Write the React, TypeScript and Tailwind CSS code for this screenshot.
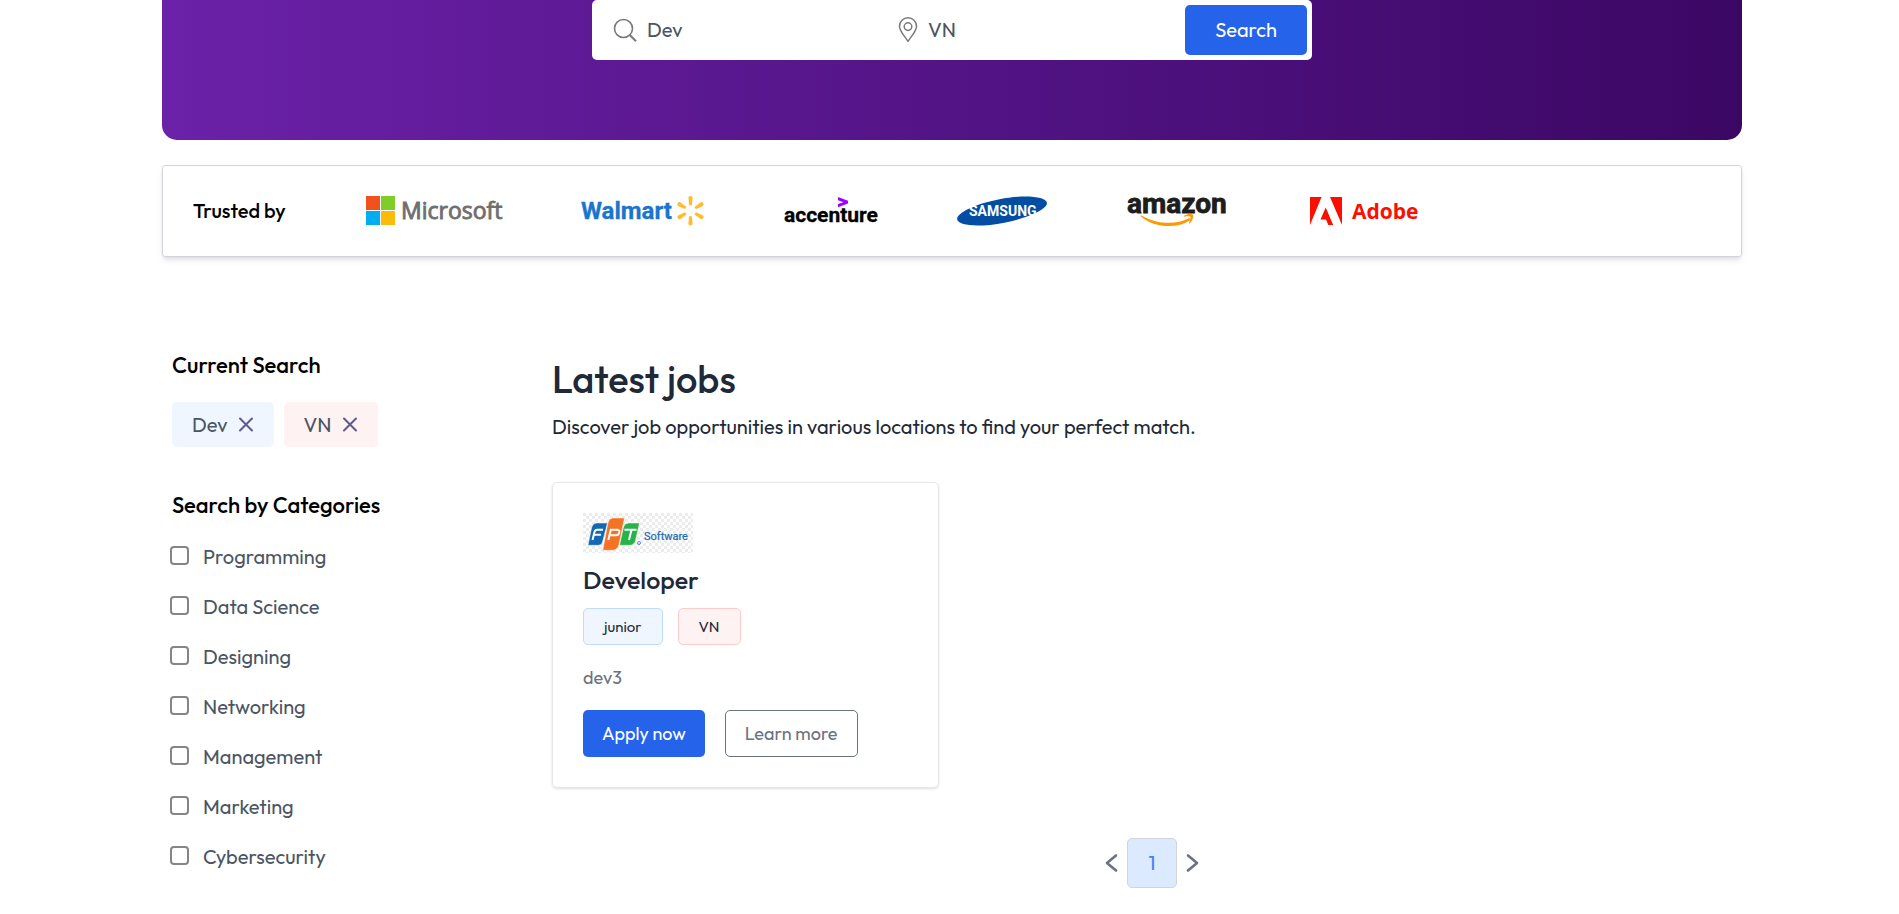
import { useState } from "react";

const CATEGORIES = [
  "Programming",
  "Data Science",
  "Designing",
  "Networking",
  "Management",
  "Marketing",
  "Cybersecurity",
];

function SearchIcon() {
  return (
    <svg className="size-6 shrink-0" viewBox="0 0 24 24" fill="none" stroke="#7a7a7a" strokeWidth="1.6" aria-hidden="true">
      <circle cx="10.500" cy="10.5" r="9" />
      <path d="M16.800 17 L23 23.3" strokeWidth="2" />
    </svg>
  );
}

function PinIcon() {
  return (
    <svg className="h-[26px] w-5 shrink-0" viewBox="0 0 20 26" fill="none" stroke="#7a7a7a" strokeWidth="1.5" strokeLinejoin="round" aria-hidden="true">
      <path d="M10 24.5 C7.5 20 1.5 14.5 1.5 9.2 A8.5 8.4 0 0 1 18.5 9.2 C18.5 14.5 12.5 20 10 24.5 Z" />
      <circle cx="10" cy="9.6" r="3.8" />
    </svg>
  );
}

function CrossIcon() {
  return (
    <svg className="block size-4" viewBox="0 0 16 16" stroke="#5b5b8c" strokeWidth="2" strokeLinecap="round" aria-hidden="true">
      <path d="M2 1.500 L14 13.500 M14 1.500 L2 13.500" />
    </svg>
  );
}

function MicrosoftLogo() {
  return (
    <svg className="overflow-visible" width="135" height="30" viewBox="0 0 135 30" role="img" aria-label="Microsoft">
      <rect x="0" y="0" width="14" height="14" fill="#f1511b" />
      <rect x="15" y="0" width="14" height="14" fill="#80cc28" />
      <rect x="0" y="15" width="14" height="14" fill="#00adef" />
      <rect x="15" y="15" width="14" height="14" fill="#fbbc09" />
      <text x="35" y="23" fill="#6f6f6f" stroke="#6f6f6f" strokeWidth="0.900" fontFamily="'Open Sans', sans-serif" fontSize="23">Microsoft</text>
    </svg>
  );
}

function WalmartLogo() {
  return (
    <svg className="overflow-visible" width="123" height="30" viewBox="0 0 123 30" role="img" aria-label="Walmart">
      <text x="0" y="23" fill="#1a75cf" stroke="#1a75cf" strokeWidth="0.300" fontFamily="Roboto, sans-serif" fontSize="24" fontWeight="700">Walmart</text>
      <g fill="#ffbc2b">
        {[0, 60, 120, 180, 240, 300].map((angle) => (
          <path key={angle} transform={`rotate(${angle} 109.5 14.7)`} d="M107.4 1.6 Q107.4 0 109.5 0 Q111.6 0 111.6 1.6 L110.9 9 Q109.5 10 108.1 9 Z" />
        ))}
      </g>
    </svg>
  );
}

function AccentureLogo() {
  return (
    <svg className="overflow-visible" width="93" height="30" viewBox="0 0 93 30" role="img" aria-label="accenture">
      <path d="M54 1 L64 4.8 V7.6 L54 11.2 V7.9 L59.4 6.2 L54 4.3 Z" fill="#a100ff" />
      <text x="0" y="26" fill="#000" stroke="#000" strokeWidth="0.300" fontFamily="Roboto, sans-serif" fontSize="21" fontWeight="700">accenture</text>
    </svg>
  );
}

function SamsungLogo() {
  return (
    <svg width="90" height="30" viewBox="0 0 90 30" role="img" aria-label="Samsung">
      <path d="M89.9 6.8 C91 12.8 72 21.9 47.500 26.700 C23 31.500 1.300 30 0.200 23.600 C-1 17.300 18 8 42.500 3.300 C67 -1.500 88.700 0.400 89.900 6.800 Z" fill="#034ea2" />
      <text x="12" y="20" fill="#fff" fontFamily="Roboto, sans-serif" fontSize="14" fontWeight="700">SAMSUNG</text>
    </svg>
  );
}

function AmazonLogo() {
  return (
    <svg className="overflow-visible" width="98" height="30" viewBox="0 0 98 30" role="img" aria-label="amazon">
      <text x="0" y="17" fill="#1d1d1b" stroke="#1d1d1b" strokeWidth="0.800" fontFamily="Roboto, sans-serif" fontSize="28" fontWeight="700">amazon</text>
      <path d="M14.500 19.500 C30 29 50 28.500 61.500 22.500 C63 21.800 64 23.300 62.500 24.500 C50 33 27 32 14 20.400 C13.500 19.700 13.900 19.200 14.500 19.500 Z" fill="#ff9900" />
      <path d="M57 19.800 C60 17.700 65 17.600 66 18.700 C66.800 20 65.500 25 62.800 27.200 C62.200 27.700 61.800 27.400 62 26.700 C63 24.200 64 21.500 63.300 20.800 C62.500 20 59.500 20.400 57.300 20.700 C56.500 20.800 56.400 20.300 57 19.800 Z" fill="#ff9900" />
    </svg>
  );
}

function AdobeLogo() {
  return (
    <svg className="overflow-visible" width="113" height="30" viewBox="0 0 113 30" role="img" aria-label="Adobe">
      <path d="M5 1 H16.600 L5 29 Z M25 1 H37 V29 Z M20.700 11.400 L28.200 29 H23.300 L21 23.400 H15.500 Z" fill="#fa0f00" />
      <text x="47" y="23" fill="#fa0f00" fontFamily="'Open Sans', sans-serif" fontSize="21" fontWeight="700">Adobe</text>
    </svg>
  );
}

function FptLogo() {
  return (
    <svg width="110" height="40" viewBox="0 0 110 40" role="img" aria-label="FPT Software">
      <defs>
        <pattern id="checks" width="6" height="6" patternUnits="userSpaceOnUse">
          <rect width="6" height="6" fill="#fff" />
          <rect width="3" height="3" fill="#ececec" />
          <rect x="3" y="3" width="3" height="3" fill="#ececec" />
        </pattern>
      </defs>
      <rect width="110" height="40" fill="url(#checks)" />
      <g stroke="#fff" strokeWidth="0.5">
        <path d="M14 10 H24.500 L19.500 29 Q18.700 32.300 15.500 32.300 H5 L8.500 15 Q9.800 10 14 10 Z" fill="#1368b3" />
        <path d="M46 10 H56.500 L52.500 27.500 Q51.200 32.300 47 32.300 H36.500 L40.500 14 Q41.500 10 46 10 Z" fill="#27b24a" />
        <path d="M30 5 H41.500 L36 31.500 Q34.500 37.300 29.500 37.300 H19.800 L24.700 11 Q26 5 30 5 Z" fill="#f37224" />
      </g>
      <g fill="none" stroke="#fff" strokeWidth="2">
        <path d="M9.500 27 L11.500 19 Q12.100 16.800 14.200 16.800 H20 M11 21.800 H18" />
        <path d="M25.300 27 L27.800 16.800 H34 Q37 16.800 36.300 19.400 Q35.600 22.200 33 22.200 H27" />
        <path d="M41.500 16.800 H53.500 M48.500 16.800 L46 27" />
      </g>
      <circle cx="56" cy="30" r="1.500" fill="none" stroke="#1368b3" strokeWidth="0.700" />
      <text x="61" y="27" fill="#1b69b4" stroke="#1b69b4" strokeWidth="0.200" fontFamily="Roboto, sans-serif" fontSize="11">Software</text>
    </svg>
  );
}

function Chevron({ path }: { path: string }) {
  return (
    <svg className="block h-5 w-3.5" viewBox="0 0 14 20" fill="none" stroke="#6b7280" strokeWidth="2.600" strokeLinecap="round" strokeLinejoin="round" aria-hidden="true">
      <path d={path} />
    </svg>
  );
}

export default function App() {
  const [title, setTitle] = useState("Dev");
  const [place, setPlace] = useState("VN");

  return (
    <div className="overflow-hidden bg-white pr-[147px] pl-[152px] font-[Outfit,Lato,sans-serif] text-[20px] leading-[30px] text-[#1f2937]">
      <section className="mx-[10px] rounded-b-[15px] bg-[linear-gradient(to_right,#6b21a8,#3b0764)] pb-20">
        <form className="mx-auto flex w-[720px] max-w-full items-center justify-between rounded-[5px] bg-white p-[5px] text-[#4b5563]" onSubmit={(e) => e.preventDefault()}>
          <label className="ml-4 flex items-center gap-2.5">
            <SearchIcon />
            <input aria-label="Job title" className="w-[234px] outline-none" value={title} onChange={(e) => setTitle(e.target.value)} />
          </label>
          <label className="flex items-center gap-2.5">
            <PinIcon />
            <input aria-label="Location" className="w-60 outline-none" value={place} onChange={(e) => setPlace(e.target.value)} />
          </label>
          <button type="submit" className="h-[50px] rounded-[5px] bg-[#2563eb] px-[30px] text-white">Search</button>
        </form>
      </section>

      <section className="mx-[10px] mt-[25px] flex h-[92px] items-center gap-20 rounded-[3px] border border-[#d1d5db] px-[30px] shadow-md">
        <p className="font-medium text-black">Trusted by</p>
        <MicrosoftLogo />
        <WalmartLogo />
        <AccentureLogo />
        <SamsungLogo />
        <AmazonLogo />
        <AdobeLogo />
      </section>

      <div className="mt-[90px] flex">
        <aside className="w-1/4 pl-5">
          <h2 className="pt-[3px] text-[22px] leading-[30px] font-medium text-black">Current Search</h2>
          <div className="mt-[22px] flex gap-2.5 text-[#4b5563]">
            <span className="flex h-[45px] items-center gap-2.5 rounded-[5px] bg-[#eff6ff] px-5">
              Dev
              <button type="button" aria-label="Remove Dev"><CrossIcon /></button>
            </span>
            <span className="flex h-[45px] items-center gap-2.5 rounded-[5px] bg-[#fef2f2] px-5">
              VN
              <button type="button" aria-label="Remove VN"><CrossIcon /></button>
            </span>
          </div>
          <h2 className="mt-[43px] text-[22px] leading-[30px] font-medium text-black">Search by Categories</h2>
          <ul className="mt-[22px] -ml-0.5 flex flex-col gap-5 text-[#4b5563]">
            {CATEGORIES.map((name) => (
              <li key={name}>
                <label className="flex items-start gap-3.5">
                  <input type="checkbox" className="mt-1 size-[19px] appearance-none rounded-[4px] border-2 border-[#858585] bg-white checked:bg-[#2563eb]" />
                  {name}
                </label>
              </li>
            ))}
          </ul>
        </aside>

        <main className="w-3/4">
          <h1 className="pt-[10px] text-[38px] leading-[45px] font-medium">Latest jobs</h1>
          <p className="mt-2.5">Discover job opportunities in various locations to find your perfect match.</p>
          <div className="mt-10 grid grid-cols-3 gap-5">
            <article className="rounded-[5px] border border-[#e5e7eb] p-[30px] shadow-sm">
              <FptLogo />
              <h3 className="mt-2.5 text-[25px] leading-[35px] font-medium">Developer</h3>
              <div className="mt-2.5 flex gap-[15px] text-[15px] leading-[25px]">
                <span className="rounded-[5px] border border-[#bfdbfe] bg-[#eff6ff] px-5 py-[5px]">junior</span>
                <span className="rounded-[5px] border border-[#fecaca] bg-[#fef2f2] px-5 py-[5px]">VN</span>
              </div>
              <p className="mt-5 text-[18px] leading-[25px] text-[#6b7280]">dev3</p>
              <div className="mt-5 flex gap-5 text-[18px] leading-[25px]">
                <button type="button" className="h-[47px] rounded-[5px] bg-[#2563eb] px-[19px] text-white">Apply now</button>
                <button type="button" className="h-[47px] rounded-[5px] border border-[#6b7280] px-[19px] text-[#6b7280]">Learn more</button>
              </div>
            </article>
          </div>
          <nav aria-label="Pages" className="mt-[50px] mb-[26px] flex items-center justify-center gap-[9px]">
            <button type="button" aria-label="Previous page"><Chevron path="M12 2.500 L3 10 L12 17.500" /></button>
            <button type="button" className="size-[50px] rounded-[5px] border border-[#d1d5db] bg-[#dbeafe] text-[#3b82f6]">1</button>
            <button type="button" aria-label="Next page"><Chevron path="M2 2.500 L11 10 L2 17.500" /></button>
          </nav>
        </main>
      </div>
    </div>
  );
}
